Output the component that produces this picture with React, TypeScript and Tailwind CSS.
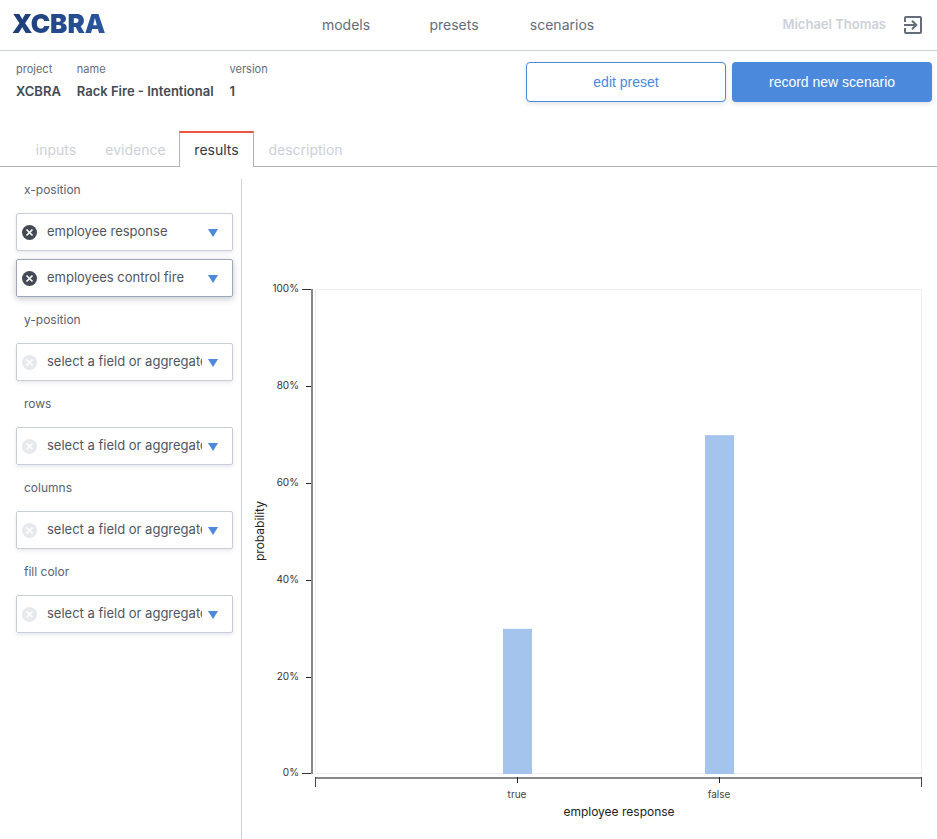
import React from "react";

const tabs = [
  { name: "inputs", width: "w-[72px]" },
  { name: "evidence", width: "w-[87px]" },
  { name: "results", width: "w-[75px]", active: true },
  { name: "description", width: "w-[103px]" },
];

const groups: { label: string; fields: { value: string | null; focused?: boolean }[] }[] = [
  { label: "x-position", fields: [{ value: "employee response" }, { value: "employees control fire", focused: true }] },
  { label: "y-position", fields: [{ value: null }] },
  { label: "rows", fields: [{ value: null }] },
  { label: "columns", fields: [{ value: null }] },
  { label: "fill color", fields: [{ value: null }] },
];

const placeholder = "select a field or aggregate";

function ExitIcon() {
  return (
    <svg viewBox="0 0 18 18" className="block h-[18px] w-[18px]" fill="none" stroke="currentColor" strokeWidth="2" aria-hidden="true">
      <path d="M1 6V2a1 1 0 0 1 1-1h14a1 1 0 0 1 1 1v14a1 1 0 0 1-1 1H2a1 1 0 0 1-1-1v-4" />
      <path d="M0 9h12M8 4.7L12.3 9L8 13.3" />
    </svg>
  );
}

function Field({ label, value, focused }: { label: string; value: string | null; focused?: boolean }) {
  return (
    <div
      className={
        focused
          ? "flex h-[38px] items-center rounded-xs border border-[#9ea7b8] pl-[5px] pr-3.5 shadow-[0_2px_6px_rgba(60,70,90,0.3)]"
          : "flex h-[38px] items-center rounded-xs border border-[#c9cdd8] pl-[5px] pr-3.5 shadow-[0_2px_4px_rgba(60,70,90,0.12)]"
      }
    >
      <button type="button" aria-label={`clear ${label}`} className={value ? "text-[#434a54]" : "text-[#e6e9ed]"}>
        <svg viewBox="0 0 15 15" className="block h-[15px] w-[15px]" aria-hidden="true">
          <circle cx="7.5" cy="7.5" r="7.5" fill="currentColor" />
          <path d="M4.5 4.5l6 6M10.5 4.5l-6 6" stroke="#fff" strokeWidth="1.7" />
        </svg>
      </button>
      <select
        aria-label={label}
        defaultValue={value ?? placeholder}
        className="ml-2.5 h-9 w-0 min-w-0 flex-1 appearance-none overflow-hidden bg-transparent text-[13px] text-[#4f5661] outline-none"
      >
        <option>{value ?? placeholder}</option>
      </select>
      <svg viewBox="0 0 10 8" className="ml-1.5 mt-0.5 h-2 w-2.5 shrink-0" aria-hidden="true">
        <path d="M0 0h10L5 8z" fill="#4a89dc" />
      </svg>
    </div>
  );
}

const ticks = [0, 20, 40, 60, 80, 100];
const bars = [
  { name: "true", value: 30, x: 261 },
  { name: "false", value: 70, x: 463 },
];
const baseY = 595;
const yFor = (v: number) => baseY - (v * 484) / 100;

function Chart() {
  return (
    <svg viewBox="0 0 695 648" className="block w-full" role="img" aria-label="probability by employee response">
      <rect x="73.5" y="110.5" width="606" height="484" fill="none" stroke="#eeeeee" />
      {ticks.map((t) => (
        <g key={t}>
          <path d={`M64 ${Math.ceil(yFor(t)) - 0.5}h6`} stroke="#222" />
          <text x="57" y={Math.ceil(yFor(t)) + 2} textAnchor="end" fontSize="10" fill="#333">
            {t}%
          </text>
        </g>
      ))}
      <path d="M60 110.5h10V594.5h-10" fill="none" stroke="#333" />
      <path d="M70 110v485" stroke="#888" strokeWidth="2" />
      <path d="M73 599h607" stroke="#888" strokeWidth="2" />
      <path d="M73.5 598v10M679.5 598v10" stroke="#444" />
      {bars.map((b) => (
        <g key={b.name}>
          <rect x={b.x} y={yFor(b.value)} width="29" height={baseY - yFor(b.value)} fill="#a4c4ed" />
          <path d={`M${b.x + 14.5} 598v6`} stroke="#222" />
          <text x={b.x + 14} y="619" textAnchor="middle" fontSize="10" fill="#444">
            {b.name}
          </text>
        </g>
      ))}
      <text x="377" y="637" textAnchor="middle" fontSize="12" fill="#222">
        employee response
      </text>
      <text transform="translate(22 352) rotate(-90)" textAnchor="middle" fontSize="12" fill="#222">
        probability
      </text>
    </svg>
  );
}

export default function App() {
  return (
    <div className="flex min-h-screen flex-col bg-white font-['Inter','Liberation_Sans',sans-serif] text-[#434a54]">
      <header className="grid h-[51px] grid-cols-[280px_auto_1fr] items-center border-b border-[#ccd1d9] pl-3 pr-[15px]">
        <a href="#home" className="mb-0.5 justify-self-start bg-linear-to-r from-[#1f3d77] to-[#2b569e] bg-clip-text text-[26px] leading-6 font-black text-transparent">
          XCBRA
        </a>
        <nav className="grid grid-cols-[108px_108px_108px] text-center text-sm text-[#656d78]">
          <a href="#models">models</a>
          <a href="#presets">presets</a>
          <a href="#scenarios">scenarios</a>
        </nav>
        <div className="flex items-center justify-end gap-[18px]">
          <span className="text-[13px] font-semibold text-[#ccd1d9]">Michael Thomas</span>
          <button type="button" aria-label="log out" className="text-[#656d78]">
            <ExitIcon />
          </button>
        </div>
      </header>

      <section className="flex h-20 items-start justify-between pl-4 pr-[5px] pt-[11px]">
        <dl className="flex gap-4">
          {[
            ["project", "XCBRA"],
            ["name", "Rack Fire - Intentional"],
            ["version", "1"],
          ].map(([k, v]) => (
            <div key={k}>
              <dt className="text-[11px] leading-[14px] text-[#656d78]">{k}</dt>
              <dd className="mt-1 text-[13px] leading-[22px] font-semibold">{v}</dd>
            </div>
          ))}
        </dl>
        <div className="flex gap-1.5 font-['Liberation_Sans',Arial,sans-serif] text-sm">
          <button type="button" className="h-10 w-[200px] rounded border border-[#4a89dc] bg-white text-[#4a89dc] shadow-[0_2px_4px_rgba(60,70,90,0.15)]">
            edit preset
          </button>
          <button type="button" className="h-10 w-[200px] rounded bg-[#4a89dc] text-white shadow-[0_2px_4px_rgba(60,70,90,0.15)]">
            record new scenario
          </button>
        </div>
      </section>

      <nav className="flex h-9 text-sm">
        <span className="w-5 border-b border-[#aab2bd]" />
        {tabs.map((t) => (
          <button
            key={t.name}
            type="button"
            className={`${t.width} ${
              t.active
                ? "border-x border-t-2 border-x-[#aab2bd] border-t-[#e9573f] pb-px text-[#333a44]"
                : "border-b border-t-2 border-b-[#aab2bd] border-t-transparent text-[#ccd1d9]"
            }`}
          >
            {t.name}
          </button>
        ))}
        <span className="flex-1 border-b border-[#aab2bd]" />
      </nav>

      <main className="mt-3 flex flex-1">
        <aside className="w-[242px] shrink-0 border-r border-[#ccd1d9] pl-4 pr-2">
          {groups.map((g) => (
            <fieldset key={g.label} className="mb-3 min-w-0">
              <legend className="h-[34px] pl-2 pt-0.5 text-xs leading-[18px] text-[#5a6270]">{g.label}</legend>
              <div className="flex flex-col gap-2">
                {g.fields.map((f, i) => (
                  <Field key={i} label={`${g.label} ${i + 1}`} value={f.value} focused={f.focused} />
                ))}
              </div>
            </fieldset>
          ))}
        </aside>
        <div className="min-w-0 flex-1">
          <Chart />
        </div>
      </main>
    </div>
  );
}
